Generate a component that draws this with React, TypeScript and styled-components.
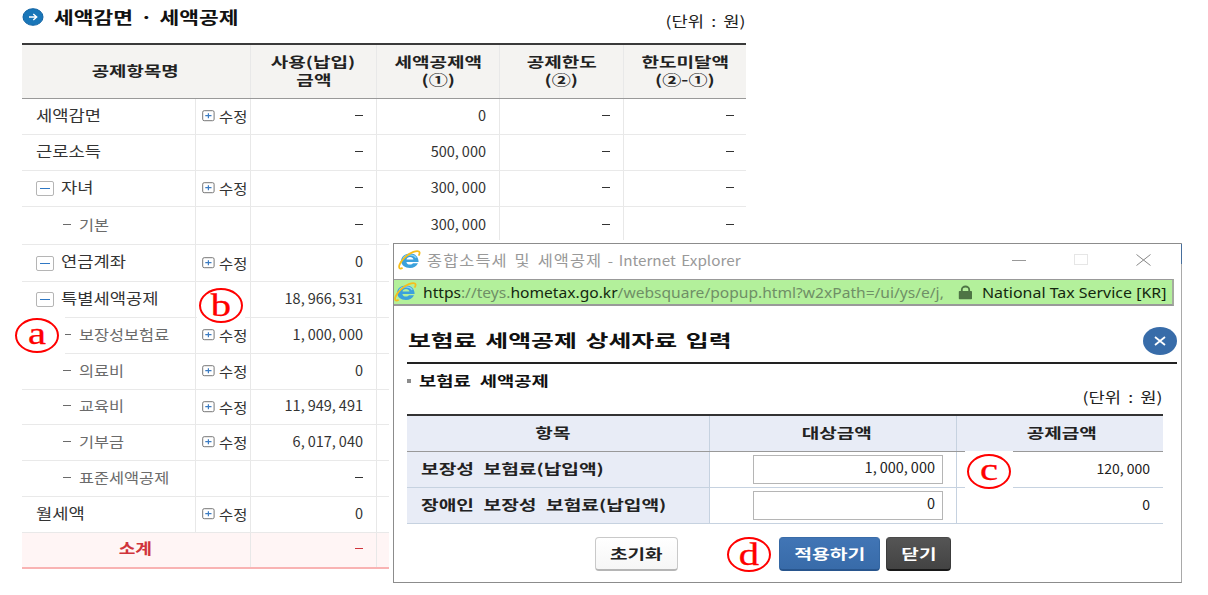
import type { ReactNode } from "react";
import styled, { createGlobalStyle } from "styled-components";

const GlobalStyle = createGlobalStyle`
  * {
    box-sizing: border-box;
  }
  body {
    margin: 0;
    background: #fff;
    color: #333;
    font-family: "Noto Sans CJK KR", sans-serif;
    font-size: 14.5px;
    line-height: 18px;
    overflow: hidden;
  }
`;

const Page = styled.main`
  position: relative;
  width: 1208px;
  height: 595px;
  padding: 0 0 0 22px;
  background: #fff;
`;

// the screens use a wide bitmap-like face, so every label is widened a little
const Wide = styled.span<{ $x?: number; $from?: string; $gap?: number }>`
  display: inline-block;
  white-space: pre;
  word-spacing: ${(p) => p.$gap ?? 0}px;
  transform: scaleX(${(p) => p.$x ?? 1.22});
  transform-origin: ${(p) => p.$from ?? "left"} center;
`;

const Comma = styled.span`
  margin-right: 3px;
`;

/* ---------- left: deduction list ---------- */

const List = styled.section`
  width: 724px;
`;

const ListTop = styled.header`
  display: flex;
  justify-content: space-between;
  height: 43px;
`;

const ListTitle = styled.h1`
  display: flex;
  align-items: center;
  gap: 10px;
  height: 34px;
  margin: 0;
  color: #111;
  font-size: 16.5px;
  font-weight: 700;
`;

const Unit = styled.div<{ $top: number }>`
  padding-top: ${(p) => p.$top}px;
  color: #222;
`;

const ListRow = styled.div<{ $h: number; $total?: boolean }>`
  display: grid;
  grid-template-columns: ${(p) => (p.$total ? "229px" : "174px 55px")} 126px 123px 124px 123px;
  height: ${(p) => p.$h}px;
  background: ${(p) => (p.$total ? "#fff5f5" : "#fff")};
  border-bottom: ${(p) => (p.$total ? "2px solid #f9b3b3" : "1px solid #e9e9e9")};
  color: ${(p) => (p.$total ? "#d0343c" : "#333")};
`;

const ListHead = styled.div`
  display: grid;
  grid-template-columns: 229px 126px 123px 124px 122px;
  height: 56px;
  border-top: 2px solid #3a3a3a;
  border-bottom: 1px solid #999;
  background: #f4f3f1;
`;

const HeadCell = styled.div`
  display: flex;
  flex-direction: column;
  align-items: center;
  justify-content: center;
  padding: 0 0 4px;
  border-right: 1px solid #e8e8e8;
  color: #222;
  font-weight: 700;
  font-size: 14px;
  &:first-child {
    padding-right: 2px;
  }
  &:last-child {
    border-right: 0;
  }
`;

const NameCell = styled.div<{ $indent: number; $sub?: boolean }>`
  display: flex;
  align-items: center;
  gap: 8px;
  padding: 0 0 4px ${(p) => p.$indent}px;
  border-right: 1px solid #e8e8e8;
  color: ${(p) => (p.$sub ? "#6b6b6b" : "#333")};
  font-size: ${(p) => (p.$sub ? 13.4 : 14.5)}px;
`;

const EditCell = styled.div`
  display: flex;
  align-items: center;
  gap: 4px;
  padding: 0 0 1px 6px;
  border-right: 1px solid #e8e8e8;
  font-size: 14px;
`;

const ValueCell = styled.div`
  display: flex;
  align-items: center;
  justify-content: flex-end;
  padding: 0 13px 4px 0;
  border-right: 1px solid #e8e8e8;
  &:last-child {
    border-right: 0;
  }
`;

const TotalCell = styled.div`
  display: flex;
  align-items: center;
  justify-content: center;
  padding: 0 2px 4px 0;
  border-right: 1px solid #e8e8e8;
  font-weight: 700;
`;

const Dash = styled.i`
  width: 8px;
  height: 1px;
  margin-top: 1px;
  background: currentColor;
`;

const Toggle = styled.i`
  display: flex;
  align-items: center;
  justify-content: center;
  width: 18px;
  height: 15px;
  margin: 4px -1px 0 0;
  border: 1px solid #b5b5b5;
  border-radius: 2px;
  &::after {
    content: "";
    width: 10px;
    height: 1px;
    background: #2f78c4;
  }
`;

/* ---------- right: browser popup ---------- */

const PopupArea = styled.div`
  position: absolute;
  left: 389px;
  top: 240px;
  width: 796px;
  height: 346px;
  padding: 3px 3px 3px 4px;
  background: #fff;
`;

const Popup = styled.section`
  position: relative;
  height: 340px;
  border: 1px solid #8c8c8c;
  border-right-color: #a9a9a9;
  background: #fff;
`;

const EdgeAccent = styled.i`
  position: absolute;
  right: -1px;
  top: 0;
  width: 1px;
  height: 20px;
  background: #466e9c;
`;

const TitleBar = styled.header`
  display: flex;
  align-items: center;
  height: 35px;
  padding: 0 30px 4px 4px;
  color: #999;
  font-size: 14px;
`;

const TitleText = styled.div`
  flex: 1;
  padding-left: 6px;
`;

const Korean = styled.span`
  font-size: 15px;
  letter-spacing: 1px;
`;

const WindowButtons = styled.div`
  display: flex;
  align-items: center;
  gap: 48px;
`;

const Address = styled.div`
  display: flex;
  align-items: center;
  width: 780px;
  height: 27px;
  border: 1px solid #999;
  border-width: 1px 2px 2px 0;
  border-right-color: #a5ab9f;
  background: #b3f09b;
  color: #6f8f66;
  font-family: "Noto Sans", sans-serif;
  font-size: 14.5px;
  b {
    color: #14280f;
    font-weight: 400;
  }
`;

const Url = styled.div`
  width: 541px;
  padding-left: 6px;
`;

const Owner = styled.div`
  padding-left: 9px;
  color: #14280f;
`;

const PopupHead = styled.div`
  display: flex;
  align-items: center;
  justify-content: space-between;
  width: 770px;
  height: 58px;
  margin-left: 13px;
  padding-top: 13px;
  border-bottom: 2px solid #222;
`;

const PopupTitle = styled.h2`
  margin: -2px 0 0 1px;
  color: #111;
  font-size: 17.5px;
  font-weight: 700;
`;

const RoundClose = styled.div`
  display: flex;
  align-items: center;
  justify-content: center;
  width: 34px;
  height: 28px;
  border-radius: 50%;
  background: #386ca9;
`;

const Section = styled.div`
  display: flex;
  justify-content: space-between;
  width: 756px;
  height: 50px;
  margin-left: 13px;
  color: #222;
`;

const SectionTitle = styled.h3`
  display: flex;
  align-items: center;
  gap: 8px;
  height: 31px;
  margin: 0;
  color: #111;
  font-size: 14px;
  font-weight: 700;
  &::before {
    content: "";
    width: 4px;
    height: 4px;
    margin-top: 2px;
    background: #8c8c8c;
  }
`;

const PopupTable = styled.div`
  width: 756px;
  margin-left: 13px;
  border-top: 2px solid #333;
`;

const PopupRow = styled.div<{ $head?: boolean }>`
  display: grid;
  grid-template-columns: 303px 247px 206px;
  height: 36px;
  border-bottom: 1px solid ${(p) => (p.$head ? "#999" : "#c6d2e0")};
`;

const PopupCell = styled.div<{ $shade?: boolean; $align?: string }>`
  display: flex;
  align-items: center;
  justify-content: ${(p) => p.$align ?? "center"};
  padding: 0 13px 3px 14px;
  border-right: 1px solid #c6d2e0;
  background: ${(p) => (p.$shade ? "#e8ecf6" : "#fff")};
  color: #222;
  font-size: 14px;
  font-weight: ${(p) => (p.$shade ? 700 : 400)};
  &:last-child {
    border-right: 0;
  }
`;

const PopupHeadCell = styled(PopupCell)`
  padding: 0 0 4px;
  &:first-child {
    padding-right: 10px;
  }
  &:nth-child(2) {
    padding-left: 7px;
  }
  &:last-child {
    padding-left: 3px;
  }
`;

const Amount = styled.div`
  display: flex;
  justify-content: flex-end;
  width: 190px;
  height: 29px;
  margin: 3px 0 0;
  padding: 2px 7px 0 0;
  border: 1px solid #b5b5b5;
  font-size: 14.5px;
`;

const Buttons = styled.div`
  display: flex;
  align-items: flex-start;
  margin: 13px 0 0 201px;
`;

const Button = styled.div<{ $kind?: "apply" | "close" }>`
  display: flex;
  align-items: center;
  justify-content: center;
  width: ${(p) => (p.$kind === "apply" ? 101 : p.$kind === "close" ? 65 : 83)}px;
  height: 34px;
  margin-right: ${(p) => (p.$kind === "apply" ? 6 : 101)}px;
  padding-bottom: 1px;
  border: 1px solid;
  border-bottom-width: 2px;
  border-radius: 4px;
  border-color: ${(p) =>
    p.$kind === "apply"
      ? "#3a6ca8 #3568a4 #28558d"
      : p.$kind === "close"
        ? "#4a4a4a #3c3c3c #181818"
        : "#c9c9c9 #c9c9c9 #b5b5b5"};
  background: ${(p) =>
    p.$kind === "apply"
      ? "linear-gradient(#4175b5, #386ba9)"
      : p.$kind === "close"
        ? "linear-gradient(#555, #434343)"
        : "linear-gradient(#fff, #f6f6f6)"};
  color: ${(p) => (p.$kind ? "#fff" : "#222")};
  font-size: 14px;
  font-weight: ${(p) => (p.$kind ? 700 : 600)};
`;

/* ---------- callout marks ---------- */

const MarkArea = styled.div<{ $left: number; $top: number; $right?: number }>`
  position: absolute;
  left: ${(p) => p.$left}px;
  top: ${(p) => p.$top}px;
  padding: 3px ${(p) => p.$right ?? 2}px 2px 2px;
  background: #fff;
`;

const Ring = styled.div`
  display: flex;
  align-items: center;
  justify-content: center;
  width: 44px;
  height: 35px;
  border: 2px solid #f00;
  border-radius: 50%;
  color: #f00;
  font-family: "Liberation Serif", serif;
  font-size: 32px;
  line-height: 30px;
`;

const Glyph = styled.span<{ $up: number }>`
  position: relative;
  top: -${(p) => p.$up}px;
  transform: scaleX(1.27);
  -webkit-text-stroke: 0.3px #f00;
`;

function Num({ value }: { value: string }) {
  const parts = value.split(",");
  return (
    <span>
      {parts.map((part, i) => (
        <span key={i}>
          {part}
          {i < parts.length - 1 && <Comma>,</Comma>}
        </span>
      ))}
    </span>
  );
}

function Mark(props: { left: number; top: number; right?: number; up: number; children: ReactNode }) {
  return (
    <MarkArea $left={props.left} $top={props.top} $right={props.right}>
      <Ring>
        <Glyph $up={props.up}>{props.children}</Glyph>
      </Ring>
    </MarkArea>
  );
}

function ArrowIcon() {
  return (
    <svg width="22" height="18" viewBox="0 0 22 18">
      <ellipse cx="11" cy="9" rx="10" ry="8.3" fill="#1976b8" stroke="#0f62a3" />
      <path d="M7 9h7.5M11.3 6l3.4 3-3.4 3" fill="none" stroke="#fff" strokeWidth="1.4" />
    </svg>
  );
}

function PlusIcon() {
  return (
    <svg width="13" height="12" viewBox="0 0 13 12">
      <rect x=".7" y=".7" width="11.4" height="10" rx="1.5" fill="#fff" stroke="#777" />
      <path d="M3.3 5.7h6.2M6.4 3.2v5" stroke="#3c7cc2" strokeWidth="1.2" />
    </svg>
  );
}

function BrowserIcon() {
  return (
    <svg width="23" height="20" viewBox="0 0 23 20">
      <path
        d="M20 13.2C18.6 16.4 15.6 18 12 18C6.8 18 3.2 15 3.2 10.8C3.2 6.6 6.8 3.6 12 3.6C17.2 3.6 20.6 6.8 20.6 12H8.4C8.6 13.6 10 14.6 12 14.6C13.4 14.6 14.4 14.1 15 13.2ZM8.5 9.4H15.5C15.2 7.8 13.9 6.9 12 6.9C10.1 6.9 8.8 7.8 8.5 9.4Z"
        fill="#3ba1dc"
        fillRule="evenodd"
      />
      <path d="M5 8.6C6.2 6.2 8.8 4.9 12 4.9C14.8 4.9 17 6 18.2 7.8" fill="none" stroke="#8ad2f4" strokeWidth="1.2" />
      <path
        d="M4.6 17.8C1.6 19.8.4 17.8 1.6 14.6C3.4 9.8 9.4 4.2 15.4 1.9C20.4 0 23.2 1.4 20.6 5.6"
        fill="none"
        stroke="#f6be1c"
        strokeWidth="1.8"
      />
    </svg>
  );
}

function LockIcon() {
  return (
    <svg width="15" height="15" viewBox="0 0 15 15">
      <path d="M3.8 7V4.7a3.7 3.2 0 0 1 7.4 0V7" fill="none" stroke="#4e7445" strokeWidth="1.8" />
      <rect x=".8" y="6" width="13.2" height="8.2" rx=".8" fill="#4e7445" />
    </svg>
  );
}

type Item = {
  name: string;
  h?: number;
  edit?: boolean;
  toggle?: boolean;
  sub?: boolean;
  values: string[];
};

const items: Item[] = [
  { name: "세액감면", edit: true, values: ["-", "0", "-", "-"] },
  { name: "근로소득", values: ["-", "500,000", "-", "-"] },
  { name: "자녀", toggle: true, edit: true, values: ["-", "300,000", "-", "-"] },
  { name: "기본", sub: true, h: 38, values: ["-", "300,000", "-", "-"] },
  { name: "연금계좌", toggle: true, edit: true, h: 37, values: ["0"] },
  { name: "특별세액공제", toggle: true, values: ["18,966,531"] },
  { name: "보장성보험료", sub: true, edit: true, values: ["1,000,000"] },
  { name: "의료비", sub: true, edit: true, values: ["0"] },
  { name: "교육비", sub: true, edit: true, h: 35, values: ["11,949,491"] },
  { name: "기부금", sub: true, edit: true, values: ["6,017,040"] },
  { name: "표준세액공제", sub: true, values: ["-"] },
  { name: "월세액", edit: true, values: ["0"] },
];

const heads = [
  ["사용(납입)", "금액"],
  ["세액공제액", "(①)"],
  ["공제한도", "(②)"],
  ["한도미달액", "(②-①)"],
];

const details = [
  { name: "보장성 보험료(납입액)", amount: "1,000,000", credit: "120,000" },
  { name: "장애인 보장성 보험료(납입액)", amount: "0", credit: "0" },
];

function Value({ value }: { value?: string }) {
  return (
    <ValueCell>
      {value === "-" && <Dash />}
      {value && value !== "-" && <Num value={value} />}
    </ValueCell>
  );
}

function DeductionList() {
  return (
    <List>
      <ListTop>
        <ListTitle>
          <ArrowIcon />
          <Wide $x={1.3} $gap={1.6}>세액감면 · 세액공제</Wide>
        </ListTitle>
        <Unit $top={12}>
          <Wide $gap={2.6} $from="right">(단위 : 원)</Wide>
        </Unit>
      </ListTop>
      <ListHead>
        <HeadCell>
          <Wide $x={1.35} $from="center">공제항목명</Wide>
        </HeadCell>
        {heads.map(([top, bottom]) => (
          <HeadCell key={top}>
            <Wide $x={1.36} $from="center">{top}</Wide>
            <Wide $x={1.36} $from="center">{bottom}</Wide>
          </HeadCell>
        ))}
      </ListHead>
      {items.map((item) => (
        <ListRow key={item.name} $h={item.h ?? 36}>
          <NameCell $indent={item.sub ? 41 : 14} $sub={item.sub}>
            {item.toggle && <Toggle />}
            {item.sub && <Dash />}
            <Wide>{item.name}</Wide>
          </NameCell>
          <EditCell>
            {item.edit && (
              <>
                <PlusIcon />
                <Wide $x={1.1}>수정</Wide>
              </>
            )}
          </EditCell>
          {[0, 1, 2, 3].map((i) => (
            <Value key={i} value={item.values[i]} />
          ))}
        </ListRow>
      ))}
      <ListRow $h={36} $total>
        <TotalCell>
          <Wide $x={1.25} $from="center">소계</Wide>
        </TotalCell>
        <Value value="-" />
        <Value />
        <Value />
        <Value />
      </ListRow>
    </List>
  );
}

function InsurancePopup() {
  return (
    <PopupArea>
      <Popup>
        <EdgeAccent />
        <TitleBar>
          <BrowserIcon />
          <TitleText>
            <Wide $x={1.09} $gap={2}>
              <Korean>종합소득세 및 세액공제</Korean> - Internet Explorer
            </Wide>
          </TitleText>
          <WindowButtons>
            <svg width="14" height="12"><path d="M0 6.5h14" stroke="#999" /></svg>
            <svg width="14" height="12"><rect x=".5" y=".5" width="13" height="10" fill="none" stroke="#e6e6e6" /></svg>
            <svg width="15" height="12"><path d="M.5.5l14 11M14.5.5l-14 11" stroke="#888" /></svg>
          </WindowButtons>
        </TitleBar>
        <Address>
          <BrowserIcon />
          <Url>
            <Wide $x={1.075}>
              <b>https</b>://teys.<b>hometax.go.kr</b>/websquare/popup.html?w2xPath=/ui/ys/e/j,
            </Wide>
          </Url>
          <LockIcon />
          <Owner>
            <Wide $x={1.1}>National Tax Service [KR]</Wide>
          </Owner>
        </Address>
        <PopupHead>
          <PopupTitle>
            <Wide $x={1.42} $gap={2.2}>보험료 세액공제 상세자료 입력</Wide>
          </PopupTitle>
          <RoundClose>
            <svg width="12" height="10"><path d="M1 1l10 8M11 1L1 9" stroke="#fff" strokeWidth="1.8" /></svg>
          </RoundClose>
        </PopupHead>
        <Section>
          <SectionTitle>
            <Wide $x={1.34} $gap={3.5}>보험료 세액공제</Wide>
          </SectionTitle>
          <Unit $top={24}>
            <Wide $gap={2.6} $from="right">(단위 : 원)</Wide>
          </Unit>
        </Section>
        <PopupTable>
          <PopupRow $head>
            {["항목", "대상금액", "공제금액"].map((head) => (
              <PopupHeadCell key={head} $shade>
                <Wide $x={1.36} $from="center">{head}</Wide>
              </PopupHeadCell>
            ))}
          </PopupRow>
          {details.map((row) => (
            <PopupRow key={row.name}>
              <PopupCell $shade $align="flex-start">
                <Wide $x={1.37} $gap={3.8}>{row.name}</Wide>
              </PopupCell>
              <PopupCell $align="flex-end">
                <Amount>
                  <Num value={row.amount} />
                </Amount>
              </PopupCell>
              <PopupCell $align="flex-end">
                <Num value={row.credit} />
              </PopupCell>
            </PopupRow>
          ))}
        </PopupTable>
        <Buttons>
          <Button>
            <Wide $x={1.36} $from="center">초기화</Wide>
          </Button>
          <Button $kind="apply">
            <Wide $x={1.38} $from="center">적용하기</Wide>
          </Button>
          <Button $kind="close">
            <Wide $x={1.36} $from="center">닫기</Wide>
          </Button>
        </Buttons>
      </Popup>
    </PopupArea>
  );
}

export default function App() {
  return (
    <Page>
      <GlobalStyle />
      <DeductionList />
      <InsurancePopup />
      <Mark left={13} top={315} right={6} up={3}>a</Mark>
      <Mark left={197} top={285} up={1}>b</Mark>
      <Mark left={965} top={451} up={3}>c</Mark>
      <Mark left={725} top={534} up={1}>d</Mark>
    </Page>
  );
}
